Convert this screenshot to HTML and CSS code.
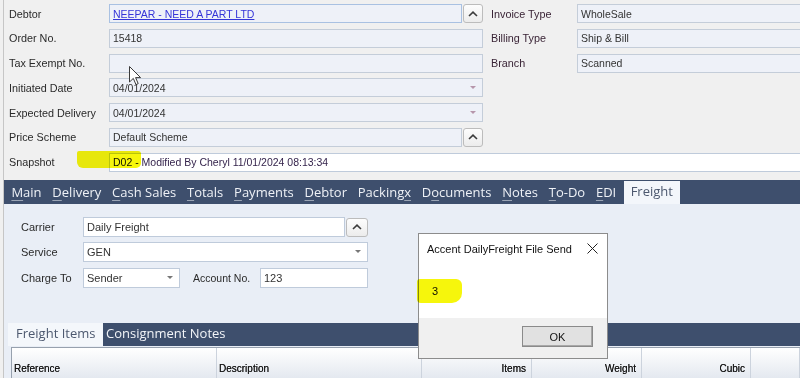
FILE: index.html
```html
<!DOCTYPE html>
<html lang="en">
<head>
    <meta charset="UTF-8">
    <meta name="viewport" content="width=device-width, initial-scale=1.0">
    <title>Sales Order - Freight</title>
    <link rel="stylesheet" href="styles.css">
</head>
<body>

    <div class="window">
        <div class="header-form">
            <label class="left-label">Debtor</label>
            <div class="left-field field-with-btn">
                <div class="input input-blue"><a href="#" class="debtor-link">NEEPAR - NEED A PART LTD</a></div>
                <button class="up-btn"><svg width="10" height="6" viewBox="0 0 10 6"><polyline points="1,5 5,1.2 9,5" fill="none" stroke="#3c3c3c" stroke-width="1.6"/></svg></button>
            </div>
            <label class="right-label">Invoice Type</label>
            <div class="right-field input">WholeSale</div>

            <label class="left-label">Order No.</label>
            <div class="left-field input">15418</div>
            <label class="right-label">Billing Type</label>
            <div class="right-field input">Ship &amp; Bill</div>

            <label class="left-label">Tax Exempt No.</label>
            <div class="left-field input"></div>
            <label class="right-label">Branch</label>
            <div class="right-field input">Scanned</div>

            <label class="left-label">Initiated Date</label>
            <div class="left-field input combo">04/01/2024<span class="arrow arrow-pink"></span></div>

            <label class="left-label">Expected Delivery</label>
            <div class="left-field input combo">04/01/2024<span class="arrow arrow-pink"></span></div>

            <label class="left-label">Price Scheme</label>
            <div class="left-field field-with-btn">
                <div class="input">Default Scheme</div>
                <button class="up-btn"><svg width="10" height="6" viewBox="0 0 10 6"><polyline points="1,5 5,1.2 9,5" fill="none" stroke="#3c3c3c" stroke-width="1.6"/></svg></button>
            </div>

            <label class="left-label">Snapshot</label>
            <div class="snapshot-field input input-white"><span class="snap-code">D02 -</span>&nbsp;<span class="snap-text">Modified By Cheryl 11/01/2024 08:13:34</span></div>
        </div>

        <div class="tabbar">
            <span class="tab"><u>M</u>ain</span>
            <span class="tab"><u>D</u>elivery</span>
            <span class="tab"><u>C</u>ash Sales</span>
            <span class="tab"><u>T</u>otals</span>
            <span class="tab"><u>P</u>ayments</span>
            <span class="tab"><u>D</u>ebtor</span>
            <span class="tab">Packing<u>x</u></span>
            <span class="tab">D<u>o</u>cuments</span>
            <span class="tab"><u>N</u>otes</span>
            <span class="tab"><u>T</u>o-Do</span>
            <span class="tab"><u>E</u>DI</span>
            <span class="tab tab-active">Freight</span>
        </div>

        <div class="tab-content">
            <div class="freight-form">
                <label>Carrier</label>
                <div class="span-field field-with-btn">
                    <div class="input input-white">Daily Freight</div>
                    <button class="up-btn"><svg width="10" height="6" viewBox="0 0 10 6"><polyline points="1,5 5,1.2 9,5" fill="none" stroke="#3c3c3c" stroke-width="1.6"/></svg></button>
                </div>

                <label>Service</label>
                <div class="span-field input input-white combo">GEN<span class="arrow"></span></div>

                <label>Charge To</label>
                <div class="input input-white combo">Sender<span class="arrow"></span></div>
                <label class="account-label">Account No.</label>
                <div class="input input-white">123</div>
            </div>

            <div class="subtabs">
                <span class="subtab subtab-active">Freight Items</span>
                <span class="subtab">Consignment Notes</span>
            </div>

            <div class="grid-table">
                <div class="grid-head">
                    <div class="col">Reference</div>
                    <div class="col">Description</div>
                    <div class="col col-num">Items</div>
                    <div class="col col-num">Weight</div>
                    <div class="col col-num">Cubic</div>
                    <div class="col"></div>
                </div>
            </div>
        </div>
    </div>

    <div class="dialog">
        <div class="dialog-title">
            <span>Accent DailyFreight File Send</span>
            <svg class="close-x" width="11" height="11" viewBox="0 0 11 11"><path d="M0.5,0.5 L10.5,10.5 M10.5,0.5 L0.5,10.5" stroke="#222" stroke-width="1"/></svg>
        </div>
        <div class="dialog-body">3</div>
        <div class="dialog-footer">
            <button class="ok-btn">OK</button>
        </div>
    </div>

    <div class="marker marker-snapshot"></div>
    <div class="marker marker-dialog"></div>

    <svg class="cursor" width="13" height="20" viewBox="0 0 13 20"><path d="M0.5,0.5 L0.5,16 L4.3,12.4 L7,18.6 L9.2,17.6 L6.6,11.6 L11.6,11.6 Z" fill="#fff" stroke="#3a3a3a" stroke-width="1"/></svg>

</body>
</html>
```

FILE: styles.css
```css
body {
    margin: 0;
    width: 800px;
    height: 378px;
    overflow: hidden;
    position: relative;
    background-color: #f0f0f0;
    font-family: "Liberation Sans", Arial, sans-serif;
    font-size: 10.8px;
    color: #333;
}

.window {
    margin-left: 3px;
    border-left: 1px solid #c6c6c6;
    height: 378px;
}

/* top part of the order */
.header-form {
    display: grid;
    grid-template-columns: 100px 374px 94px 1fr;
    grid-auto-rows: 19px;
    row-gap: 5.75px;
    padding: 4px 0 0 5px;
    margin-right: -4px;
}

.header-form label,
.freight-form label {
    display: flex;
    align-items: center;
    white-space: nowrap;
    color: #2a2a2a;
}

.left-label { grid-column: 1; }
.left-field { grid-column: 2; }
.right-label { grid-column: 3; padding-left: 8px; color: #3a2436 !important; }
.right-field { grid-column: 4; }
.snapshot-field { grid-column: 2 / 5; }

.input {
    box-sizing: border-box;
    height: 19px;
    border: 1px solid #c4cdd9;
    background-color: #eef1f8;
    padding: 0 3px;
    display: flex;
    align-items: center;
    white-space: nowrap;
    font-size: 10.5px;
    color: #333;
    position: relative;
}

.input-blue {
    border-color: #a9c1e2;
}

.input-white {
    background-color: #fff;
    border-color: #bfcbdb;
}

.debtor-link {
    color: #3535d8;
}

.snap-code {
    color: #111;
}

.snap-text {
    color: #35244c;
}

.field-with-btn {
    display: flex;
    gap: 1px;
}

.field-with-btn .input {
    flex: 1;
}

.up-btn {
    width: 20px;
    height: 19px;
    padding: 0;
    border: 1px solid #bcbcbc;
    border-radius: 3px;
    background: linear-gradient(#fdfdfd, #ececec);
    display: flex;
    align-items: center;
    justify-content: center;
}

.combo .arrow {
    position: absolute;
    right: 6px;
    top: 7px;
    width: 0;
    height: 0;
    border-left: 3px solid transparent;
    border-right: 3px solid transparent;
    border-top: 3px solid #777;
}

.combo .arrow-pink {
    border-top-color: #b696ab;
}

/* tabs */
.tabbar {
    display: flex;
    height: 24px;
    margin-top: 8px;
    padding-left: 2px;
    background-color: #3e4f6d;
}

.tab {
    display: flex;
    align-items: center;
    padding: 0 5.4px;
    font-family: "Open Sans", "Liberation Sans", sans-serif;
    font-size: 13px;
    color: #eef1f6;
    white-space: nowrap;
}

.tab u {
    text-decoration-color: #9aa4b4;
    text-underline-offset: 3px;
}

.tab-active {
    margin-left: 2px;
    margin-top: 1px;
    padding: 0 7px 3px 7px;
    background-color: #f3f6fb;
    color: #4c586f;
}

.tab-content {
    height: 174px;
    padding-top: 13px;
    background-color: #e9eef6;
}

.freight-form {
    display: grid;
    grid-template-columns: 62px 97px 80px 108px;
    grid-auto-rows: 20px;
    row-gap: 5.5px;
    padding-left: 17px;
}

.freight-form label {
    font-size: 11px;
}

.freight-form .input {
    height: 20px;
    font-size: 11px;
}

.freight-form .up-btn {
    width: 22px;
    height: 19px;
    margin-top: 1px;
}

.span-field {
    grid-column: 2 / 5;
}

.freight-form .account-label {
    padding-left: 13px;
    font-size: 10.5px;
}

.subtabs {
    display: flex;
    height: 23px;
    margin: 35px 0 0 4px;
    background-color: #3e4f6d;
}

.subtab {
    display: flex;
    align-items: center;
    padding: 0 0 2px 3px;
    font-family: "Open Sans", "Liberation Sans", sans-serif;
    font-size: 13px;
    color: #f2f4f8;
}

.subtab-active {
    width: 95px;
    box-sizing: border-box;
    padding-left: 8px;
    background-color: #f4f7fb;
    color: #4c586f;
}

.grid-table {
    margin: 1px 0 0 7px;
    border-left: 1px solid #97a1ae;
    border-top: 1px solid #97a1ae;
}

.grid-head {
    display: grid;
    grid-template-columns: 205px 205px 110px 110px 109px 1fr;
    height: 32px;
    background: linear-gradient(#ffffff, #e2e7ef);
}

.grid-head .col {
    border-right: 1px solid #ccd3dd;
    padding: 15px 3px 0 2px;
    font-size: 10px;
    color: #161616;
    text-shadow: 0 0 0.4px #333;
}

.grid-head .col-num {
    text-align: right;
    padding-right: 5px;
}

/* message box */
.dialog {
    position: absolute;
    left: 418px;
    top: 233px;
    width: 190px;
    height: 126px;
    box-sizing: border-box;
    border: 1px solid #8c8c8c;
    background-color: #fff;
    display: flex;
    flex-direction: column;
    font-size: 11px;
}

.dialog-title {
    height: 29px;
    display: flex;
    align-items: center;
    justify-content: space-between;
    padding: 0 9px 0 8px;
    color: #111;
}

.dialog-body {
    flex: 1;
    padding: 22px 0 0 13px;
    color: #111;
}

.dialog-footer {
    height: 40px;
    box-sizing: border-box;
    padding: 8px 14px 0 0;
    background-color: #f0f0f0;
    display: flex;
    justify-content: flex-end;
    align-items: flex-start;
}

.ok-btn {
    width: 71px;
    height: 21px;
    border: 1px solid #8a8a8a;
    background-color: #e1e1e1;
    box-shadow: inset -1px -1px 0 #a8a8a8;
    font-family: "Liberation Sans", Arial, sans-serif;
    font-size: 11px;
    color: #111;
}

/* yellow marker scribbles drawn on the screenshot */
.marker {
    position: absolute;
    background-color: #f6f60c;
    mix-blend-mode: multiply;
    filter: blur(0.6px);
}

.marker-snapshot {
    left: 77px;
    top: 151px;
    width: 64px;
    height: 17px;
    border-radius: 2px 3px 5px 6px;
}

.marker-dialog {
    left: 417px;
    top: 279px;
    width: 45px;
    height: 24px;
    border-radius: 3px 6px 10px 4px;
}

.cursor {
    position: absolute;
    left: 129px;
    top: 66px;
}
```
